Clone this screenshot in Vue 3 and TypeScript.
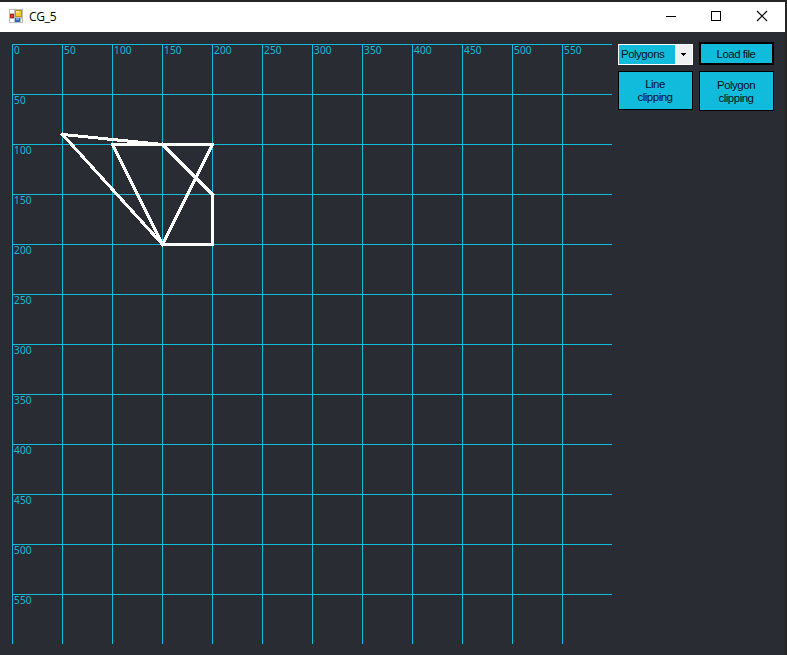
<script setup lang="ts">
interface Point {
  x: number
  y: number
}
interface Edge {
  from: Point
  to: Point
}

const cell = 50
const size = 600
const ticks: number[] = Array.from({ length: size / cell }, (_, i) => i * cell)

const triangle: Point[] = [
  { x: 100, y: 100 },
  { x: 200, y: 100 },
  { x: 150, y: 200 },
]
const shape: Point[] = [
  { x: 50, y: 90 },
  { x: 150, y: 100 },
  { x: 200, y: 150 },
  { x: 200, y: 200 },
  { x: 150, y: 200 },
]

const toEdges = (points: Point[]): Edge[] =>
  points.map((from, i) => ({ from, to: points[(i + 1) % points.length] }))

const edges: Edge[] = [triangle, shape].flatMap(toEdges)
</script>

<template>
  <div class="window">
    <header class="titlebar">
      <svg class="app-icon" width="14" height="14" viewBox="0 0 14 14" shape-rendering="crispEdges">
        <rect width="14" height="14" fill="#bdbdbd" />
        <rect x="1" y="1" width="4" height="3" fill="#fff" />
        <rect x="1" y="10" width="4" height="3" fill="#fff" />
        <rect x="12" y="10" width="1" height="3" fill="#fff" />
        <rect x="1" y="5" width="4" height="4" fill="#a81d0c" />
        <rect x="2" y="6" width="2" height="2" fill="#d9543d" />
        <rect x="6" y="1" width="7" height="7" fill="#c99208" />
        <rect x="7" y="2" width="5" height="5" fill="#f7c92f" />
        <rect x="7" y="2" width="3" height="2" fill="#ffe58a" />
        <rect x="6" y="9" width="5" height="4" fill="#2e62c4" />
        <rect x="7" y="9" width="3" height="2" fill="#74a4ee" />
      </svg>
      <span class="title">CG_5</span>
      <div class="controls">
        <svg width="10" height="10" viewBox="0 0 10 10" shape-rendering="crispEdges">
          <path d="M0 5.5H10" stroke="#000" />
        </svg>
        <svg width="10" height="10" viewBox="0 0 10 10" shape-rendering="crispEdges">
          <rect x="0.5" y="0.5" width="9" height="9" fill="none" stroke="#000" />
        </svg>
        <svg class="close" width="10" height="10" viewBox="0 0 10 10">
          <path d="M0 0L10 10M10 0L0 10" stroke="#000" stroke-width="1.1" />
        </svg>
      </div>
    </header>

    <main class="content">
      <svg class="canvas" :width="size" :height="size" :viewBox="`0 0 ${size} ${size}`">
        <g class="grid">
          <template v-for="t in ticks" :key="t">
            <rect :x="t" y="0" width="1" :height="size" />
            <rect x="0" :y="t" :width="size" height="1" />
          </template>
        </g>
        <g class="labels">
          <text v-for="t in ticks" :key="`x${t}`" :x="t + 2" y="10">{{ t }}</text>
          <text v-for="t in ticks.slice(1)" :key="`y${t}`" x="2" :y="t + 10">{{ t }}</text>
        </g>
        <g class="polygons">
          <line
            v-for="(e, i) in edges"
            :key="i"
            :x1="e.from.x + 0.5"
            :y1="e.from.y + 0.5"
            :x2="e.to.x + 0.5"
            :y2="e.to.y + 0.5"
          />
        </g>
      </svg>

      <aside class="panel">
        <div class="select">
          <span class="value">Polygons</span>
          <span class="arrow">
            <svg width="5" height="3" viewBox="0 0 5 3" shape-rendering="crispEdges">
              <path d="M0 0H5V1H4V2H3V3H2V2H1V1H0Z" fill="#000" />
            </svg>
          </span>
        </div>
        <button class="btn load" type="button">Load file</button>
        <button class="btn line" type="button">Line<br />clipping</button>
        <button class="btn poly" type="button">Polygon<br />clipping</button>
      </aside>
    </main>
  </div>
</template>

<style>
body {
  margin: 0;
  overflow: hidden;
}
</style>

<style scoped>
.window {
  box-sizing: border-box;
  width: 787px;
  height: 655px;
  border-top: 2px solid #252526;
  border-right: 2px solid #252526;
  background: #2a2c34;
  display: flex;
  flex-direction: column;
}
.titlebar {
  box-sizing: border-box;
  height: 30px;
  flex: none;
  background: #fff;
  display: flex;
  align-items: center;
  padding: 0 18px 2px 9px;
}
.title {
  margin-left: 6px;
  padding-top: 1px;
  font: 12px/16px "Open Sans", "Noto Sans", sans-serif;
  letter-spacing: -0.3px;
  color: #000;
}
.controls {
  margin-left: auto;
  display: flex;
  gap: 35px;
}
.controls svg {
  display: block;
  overflow: visible;
}
.close {
  margin-left: 1px;
}
.content {
  display: flex;
  align-items: flex-start;
  padding: 12px 11px 0 12px;
  gap: 6px;
}
.canvas {
  display: block;
  flex: none;
}
.grid {
  fill: #10bbdb;
}
.labels {
  fill: #10bbdb;
  font: 10px "Noto Sans", "Open Sans", sans-serif;
  letter-spacing: 0.2px;
}
.polygons line {
  stroke: #fff;
  stroke-width: 3;
  stroke-linecap: square;
  shape-rendering: crispEdges;
}
.panel {
  margin-top: -2px;
  display: grid;
  grid-template-columns: 75px 75px;
  grid-template-rows: 23px 40px;
  gap: 6px;
  font: 11.5px/13px "Liberation Sans", Arial, sans-serif;
  letter-spacing: -0.5px;
  color: #04101f;
}
.select {
  box-sizing: border-box;
  height: 21px;
  align-self: end;
  border: 1px solid #fff;
  background: #10bbdb;
  display: flex;
}
.value {
  flex: 1;
  padding: 3px 0 0 2px;
  white-space: nowrap;
}
.arrow {
  width: 17px;
  background: #f0f0f0;
  display: flex;
  align-items: center;
  justify-content: center;
}
.btn {
  box-sizing: border-box;
  margin: 0;
  padding: 1px 1px 0 0;
  border: 1px solid #000;
  border-radius: 0;
  background: #10bbdb;
  color: inherit;
  font: inherit;
  letter-spacing: inherit;
  text-align: center;
}
.load {
  border-width: 2px;
}
.line {
  height: 39px;
  padding-top: 0;
}
</style>
